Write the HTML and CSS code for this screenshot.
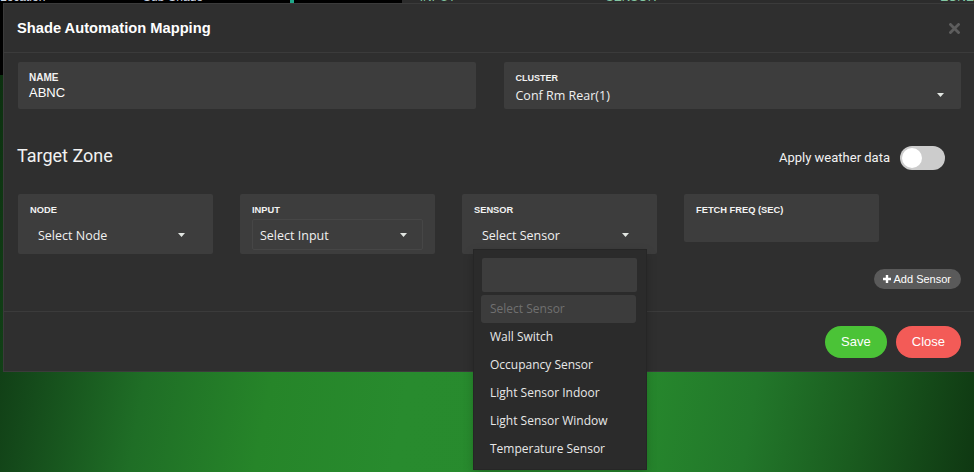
FILE: index.html
```html
<!DOCTYPE html>
<html lang="en">
<head>
<meta charset="utf-8">
<title>Shade Automation Mapping</title>
<link rel="stylesheet" href="styles.css">
</head>
<body>
<div class="page-header">
  <div class="ph-left">
    <span class="ph-text ph-w1">Location</span>
    <span class="ph-text ph-w2">Sub-Shade</span>
    <span class="ph-dot"></span>
  </div>
  <div class="ph-right">
    <span class="ph-col ph-c1">INPUT</span>
    <span class="ph-col ph-c2">SENSOR</span>
    <span class="ph-col">ZONE</span>
  </div>
</div>

<div class="modal">
  <div class="modal-header">
    <h4 class="modal-title">Shade Automation Mapping</h4>
    <svg class="modal-x" width="11" height="11" viewBox="0 0 11 11"><path d="M1.5 1.5 L9.5 9.5 M9.5 1.5 L1.5 9.5" stroke="#5d5d5d" stroke-width="2.8" stroke-linecap="square"/></svg>
  </div>

  <div class="modal-body">
    <div class="row-2">
      <div class="field">
        <div class="field-label label-name">NAME</div>
        <div class="name-input">ABNC</div>
      </div>
      <div class="field">
        <div class="field-label">CLUSTER</div>
        <div class="cluster-select">
          <span>Conf Rm Rear(1)</span>
          <svg class="caret" width="7" height="4" viewBox="0 0 7 4"><polygon points="0,0 7,0 3.5,4" fill="#e2e6e2"/></svg>
        </div>
      </div>
    </div>

    <div class="zone-row">
      <h3 class="zone-title">Target Zone</h3>
      <div class="weather">
        <span class="weather-text">Apply weather data</span>
        <span class="toggle"><span class="knob"></span></span>
      </div>
    </div>

    <div class="zone-grid">
      <div class="zbox">
        <div class="zlabel">NODE</div>
        <div class="zselect">
          <span>Select Node</span>
          <svg class="caret" width="7" height="4" viewBox="0 0 7 4"><polygon points="0,0 7,0 3.5,4" fill="#e2e6e2"/></svg>
        </div>
      </div>
      <div class="zbox">
        <div class="zlabel">INPUT</div>
        <div class="zselect bordered">
          <span>Select Input</span>
          <svg class="caret" width="7" height="4" viewBox="0 0 7 4"><polygon points="0,0 7,0 3.5,4" fill="#e2e6e2"/></svg>
        </div>
      </div>
      <div class="zbox sensor-box">
        <div class="zlabel">SENSOR</div>
        <div class="zselect">
          <span>Select Sensor</span>
          <svg class="caret" width="7" height="4" viewBox="0 0 7 4"><polygon points="0,0 7,0 3.5,4" fill="#e2e6e2"/></svg>
        </div>
        <div class="dropdown">
          <div class="dd-search"></div>
          <ul class="dd-list">
            <li class="dd-item dd-placeholder">Select Sensor</li>
            <li class="dd-item">Wall Switch</li>
            <li class="dd-item">Occupancy Sensor</li>
            <li class="dd-item">Light Sensor Indoor</li>
            <li class="dd-item">Light Sensor Window</li>
            <li class="dd-item">Temperature Sensor</li>
          </ul>
        </div>
      </div>
      <div class="zbox short">
        <div class="zlabel">FETCH FREQ (SEC)</div>
      </div>
    </div>

    <div class="add-row">
      <button class="btn-add">
        <svg width="8" height="8" viewBox="0 0 8 8"><path d="M4 0 V8 M0 4 H8" stroke="#fff" stroke-width="2.4"/></svg>
        <span>Add Sensor</span>
      </button>
    </div>
  </div>

  <div class="modal-footer">
    <button class="btn btn-save">Save</button>
    <button class="btn btn-close">Close</button>
  </div>
</div>
</body>
</html>
```

FILE: styles.css
```css
* { box-sizing: border-box; }

html, body {
  margin: 0;
  padding: 0;
}

body {
  width: 974px;
  height: 472px;
  overflow: hidden;
  position: relative;
  font-family: "Open Sans", "Noto Sans", sans-serif;
  background: linear-gradient(100deg, #0b2c0e 0%, #14491a 9%, #1f6e26 20%, #268529 32%, #288b2e 45%, #278a2d 66%, #22772a 78%, #1a5c1f 88%, #0f3812 100%);
}

/* background page (mostly hidden behind the modal) */
.page-header {
  display: flex;
  height: 75px;
}
.ph-left {
  width: 419px;
  background: #000;
  display: flex;
  align-items: flex-start;
}
.ph-right {
  flex: 1;
  background: #2c2c2c;
  display: flex;
  align-items: flex-start;
  padding-left: 18px;
}
.ph-text, .ph-col {
  font: 12px/12px "Liberation Sans", Arial, sans-serif;
  margin-top: -9px;
  display: block;
}
.ph-text { color: #cfd8e6; }
.ph-w1 { width: 143px; }
.ph-w2 { width: 147px; }
.ph-dot {
  width: 4px;
  height: 3px;
  background: #1fa88a;
}
.ph-col { color: #83c6a2; }
.ph-c1 { width: 186px; }
.ph-c2 { width: 335px; }

/* modal */
.modal {
  position: absolute;
  left: 3px;
  top: 3px;
  width: 973px;
  background: #2f2f2f;
  border: 1px solid #3b3b3b;
}

.modal-header {
  height: 49px;
  display: flex;
  align-items: center;
  justify-content: space-between;
  padding: 0 15px 0 13px;
  border-bottom: 1px solid #3b3b3b;
}
.modal-title {
  margin: 0;
  font: bold 14.7px/17px "Liberation Sans", Arial, sans-serif;
  color: #fff;
}
.modal-x { display: block; }

.modal-body {
  padding: 9px 14px 22px;
}

.row-2 {
  display: grid;
  grid-template-columns: 1fr 1fr;
  column-gap: 28px;
}

.field {
  background: #3d3d3d;
  border-radius: 2px;
  padding: 10px 11px 3px;
}
.field-label {
  font: bold 9px/12px "Liberation Sans", Arial, sans-serif;
  color: #f2f2f2;
  padding-left: 1px;
}
.label-name { font-size: 10px; padding-left: 0; }

.name-input {
  height: 22px;
  font: 13px/18px "Liberation Sans", Arial, sans-serif;
  color: #fff;
}

.cluster-select {
  height: 22px;
  display: flex;
  align-items: center;
  justify-content: space-between;
  padding: 0 6px 0 1px;
  font-size: 12.5px;
  color: #f0f0f0;
}
.caret { display: block; flex: none; }

.zone-row {
  margin-top: 37px;
  height: 24px;
  display: flex;
  align-items: center;
  justify-content: space-between;
  padding-right: 16px;
}
.zone-title {
  margin: 0 0 4px -1px;
  font: 400 18px/24px Roboto, sans-serif;
  color: #f2f2f2;
}
.weather {
  display: flex;
  align-items: center;
  gap: 10px;
}
.weather-text {
  font: 400 13px/24px Roboto, sans-serif;
  color: #f2f2f2;
}
.toggle {
  width: 45px;
  height: 24px;
  border-radius: 12px;
  background: #cccccc;
  padding: 2px;
  display: flex;
}
.knob {
  width: 20px;
  height: 20px;
  border-radius: 50%;
  background: #fff;
}

.zone-grid {
  margin-top: 24px;
  display: grid;
  grid-template-columns: repeat(4, 195px);
  column-gap: 27px;
  align-items: start;
}
.zbox {
  position: relative;
  background: #3d3d3d;
  border-radius: 2px;
  padding: 10px 12px 4px;
}
.zbox.short { height: 48px; }
.zlabel {
  font: bold 9.3px/13px "Liberation Sans", Arial, sans-serif;
  color: #f2f2f2;
  margin-bottom: 2px;
}
.zselect {
  height: 31px;
  border: 1px solid transparent;
  border-radius: 2px;
  display: flex;
  align-items: center;
  justify-content: space-between;
  padding: 1px 15px 0 7px;
  font-size: 12.5px;
  color: #f0f0f0;
}
.zselect.bordered { border-color: #464646; }

.dropdown {
  position: absolute;
  left: 12px;
  top: 56px;
  width: 172px;
  background: #2b2b2b;
  box-shadow: 0 0 0 1px #262626, 0 4px 10px rgba(0, 0, 0, 0.25);
  padding: 8px 10px 6px 7px;
  z-index: 5;
}
.dd-search {
  height: 34px;
  margin: 0 -1px 3px 1px;
  background: #3d3d3d;
  border-radius: 2px;
}
.dd-list {
  list-style: none;
  margin: 0;
  padding: 0;
}
.dd-item {
  height: 28px;
  padding-left: 9px;
  font-size: 12px;
  line-height: 28px;
  color: #e8e8e8;
}
.dd-placeholder {
  background: #3c3c3c;
  border-radius: 3px;
  color: #707070;
}

.add-row {
  margin-top: 15px;
  display: flex;
  justify-content: flex-end;
}
.btn-add {
  height: 20px;
  border: 0;
  border-radius: 10px;
  background: #5a5a5a;
  color: #fff;
  display: flex;
  align-items: center;
  gap: 3px;
  padding: 0 10px 0 9px;
  font: 11px/20px "Liberation Sans", Arial, sans-serif;
}
.btn-add svg { display: block; }

.modal-footer {
  border-top: 1px solid #3b3b3b;
  padding: 14px 14px 13px;
  display: flex;
  justify-content: flex-end;
  gap: 9px;
}
.btn {
  height: 32px;
  border: 0;
  border-radius: 16px;
  padding: 0 16px;
  color: #fff;
  font: 13px/32px "Liberation Sans", Arial, sans-serif;
}
.btn-save { background: #4bc337; }
.btn-close { background: #f35b57; }
```
